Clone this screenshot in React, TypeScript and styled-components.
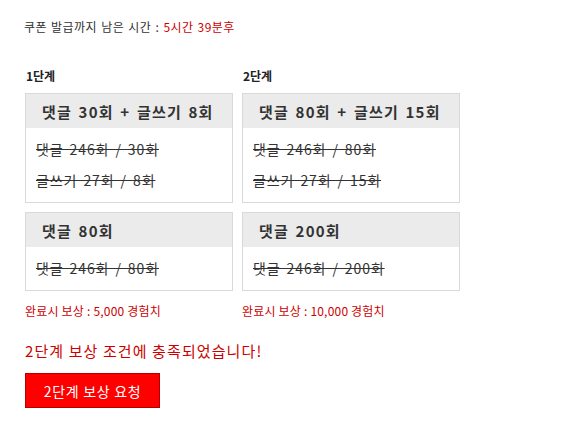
import React from "react";
import styled, { createGlobalStyle } from "styled-components";

const Global = createGlobalStyle`
  html, body { margin: 0; padding: 0; background: #fff; }
  body { font-family: "Noto Sans CJK KR", "Noto Sans", sans-serif; color: #333; }
`;

const Page = styled.div`
  padding: 18px 0 0 25px;
`;

const Timer = styled.div`
  font-size: 12px;
  line-height: 18px;
  color: #333;
  margin-left: -1px;
  letter-spacing: 0.45px;
  word-spacing: 1px;
`;

const Red = styled.span`
  color: #cc0000;
`;

const Stages = styled.div`
  display: flex;
  gap: 9px;
  margin-top: 31px;
`;

const Column = styled.div<{ $w: number }>`
  width: ${(p) => p.$w}px;
  display: flex;
  flex-direction: column;
`;

const StageLabel = styled.div`
  font-size: 12px;
  font-weight: bold;
  line-height: 18px;
  color: #222;
  margin: 0 0 8px 1px;
`;

const Card = styled.div`
  border: 1px solid #d9d9d9;
  background: #fff;
  & + & {
    margin-top: 9px;
  }
`;

const CardHead = styled.div`
  height: 34px;
  background: #ebebeb;
  display: flex;
  align-items: center;
  padding: 0 16px;
  font-size: 15px;
  font-weight: bold;
  color: #333;
  letter-spacing: 1.2px;
  word-spacing: 2px;
  white-space: nowrap;
`;

const CardBody = styled.div`
  padding: 6px 10px;
`;

const Line = styled.div`
  height: 31px;
  line-height: 31px;
  font-size: 14px;
  color: #333;
  text-decoration: line-through;
  letter-spacing: 0.9px;
  word-spacing: 2px;
  white-space: nowrap;
`;

const Reward = styled.div`
  margin-top: 11px;
  font-size: 12px;
  line-height: 18px;
  color: #cc0000;
  letter-spacing: 0.2px;
`;

const Notice = styled.div`
  margin-top: 21px;
  font-size: 15px;
  line-height: 20px;
  color: #cc0000;
  letter-spacing: 1.1px;
`;

const Button = styled.button`
  margin-top: 12px;
  width: 135px;
  height: 35px;
  background: #ff0000;
  border: 1px solid #b30000;
  color: #fff;
  font-family: inherit;
  font-size: 14px;
  letter-spacing: 0.7px;
  padding: 0;
  cursor: pointer;
`;

type Mission = { title: string; lines: string[] };

const stages: { label: string; width: number; missions: Mission[]; reward: string }[] = [
  {
    label: "1단계",
    width: 208,
    missions: [
      { title: "댓글 30회 + 글쓰기 8회", lines: ["댓글 246회 / 30회", "글쓰기 27회 / 8회"] },
      { title: "댓글 80회", lines: ["댓글 246회 / 80회"] },
    ],
    reward: "완료시 보상 : 5,000 경험치",
  },
  {
    label: "2단계",
    width: 218,
    missions: [
      { title: "댓글 80회 + 글쓰기 15회", lines: ["댓글 246회 / 80회", "글쓰기 27회 / 15회"] },
      { title: "댓글 200회", lines: ["댓글 246회 / 200회"] },
    ],
    reward: "완료시 보상 : 10,000 경험치",
  },
];

export default function App() {
  return (
    <>
      <Global />
      <Page>
        <Timer>
          쿠폰 발급까지 남은 시간 : <Red>5시간 39분후</Red>
        </Timer>
        <Stages>
          {stages.map((s) => (
            <Column key={s.label} $w={s.width}>
              <StageLabel>{s.label}</StageLabel>
              {s.missions.map((m) => (
                <Card key={m.title}>
                  <CardHead>{m.title}</CardHead>
                  <CardBody>
                    {m.lines.map((l) => (
                      <Line key={l}>{l}</Line>
                    ))}
                  </CardBody>
                </Card>
              ))}
              <Reward>{s.reward}</Reward>
            </Column>
          ))}
        </Stages>
        <Notice>2단계 보상 조건에 충족되었습니다!</Notice>
        <Button>2단계 보상 요청</Button>
      </Page>
    </>
  );
}
